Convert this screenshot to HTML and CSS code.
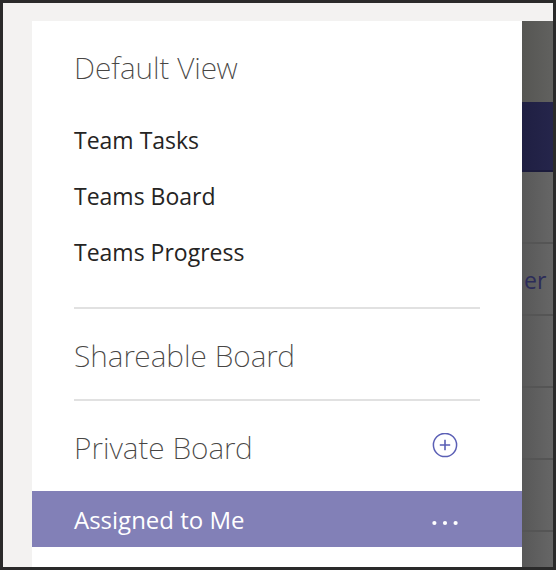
FILE: index.html
```
<!DOCTYPE html>
<html lang="en">
<head>
<meta charset="utf-8">
<title>Boards</title>
<link rel="stylesheet" href="styles.css">
</head>
<body>
<div class="window">
  <nav class="panel">
    <section class="group group-views">
      <h2 class="heading">Default View</h2>
      <ul class="list">
        <li><a class="item" href="#">Team Tasks</a></li>
        <li><a class="item" href="#">Teams Board</a></li>
        <li><a class="item" href="#">Teams Progress</a></li>
      </ul>
    </section>
    <section class="group">
      <h2 class="heading">Shareable Board</h2>
    </section>
    <section class="group">
      <div class="heading-row">
        <h2 class="heading">Private Board</h2>
        <button class="icon-button" type="button" aria-label="Add board">
          <svg width="26" height="26" viewBox="0 0 26 26" fill="none" stroke="currentColor">
            <circle cx="13" cy="12" r="11.6" stroke-width="1.5"/>
            <path d="M13 6.8v10.4M7.8 12h10.4" stroke-width="1.6"/>
          </svg>
        </button>
      </div>
    </section>
    <div class="selected">
      <a class="item" href="#">Assigned to Me</a>
      <button class="icon-button" type="button" aria-label="More options">
        <svg width="26" height="26" viewBox="0 0 26 26" fill="currentColor">
          <circle cx="2.4" cy="16" r="2.1"/>
          <circle cx="13" cy="16" r="2.1"/>
          <circle cx="23.6" cy="16" r="2.1"/>
        </svg>
      </button>
    </div>
  </nav>
  <main class="board">
    <div class="toolbar"></div>
    <div class="banner"></div>
    <div class="row"></div>
    <div class="row">er</div>
    <div class="row"></div>
    <div class="row"></div>
    <div class="row"></div>
    <div class="row"></div>
  </main>
</div>
</body>
</html>
```

FILE: styles.css
```
* {
  box-sizing: border-box;
}

body {
  margin: 0;
  font-family: "Open Sans", "Noto Sans", sans-serif;
}

.window {
  display: flex;
  height: 100vh;
  overflow: hidden;
  padding: 18px 0 0 29px;
  border: 3px solid #2a2a2a;
  background: #f3f2f1;
}

.panel {
  flex: 1;
  background: #fff;
}

.group {
  margin: 0 42px;
}

.group + .group {
  border-top: 2px solid #e1e1e1;
}

.group-views {
  padding-bottom: 27px;
}

.heading {
  margin: 0;
  padding-top: 4px;
  font-family: "Noto Sans", "Open Sans", sans-serif;
  font-size: 30px;
  font-weight: 200;
  line-height: 86px;
  color: #484644;
}

.group-views .heading {
  padding-bottom: 1px;
}

.list {
  margin: 0;
  padding: 0;
  list-style: none;
}

.item {
  display: block;
  font-size: 23px;
  line-height: 56px;
  color: #252423;
  text-decoration: none;
}

.heading-row,
.selected {
  display: flex;
  align-items: center;
  justify-content: space-between;
}

.heading-row {
  padding-right: 22px;
}

.selected {
  padding: 2px 64px 0 42px;
  background: #8280b7;
}

.selected .item {
  font-size: 24px;
  font-weight: 500;
  line-height: 54px;
  color: #fff;
}

.icon-button {
  display: flex;
  padding: 0;
  border: 0;
  background: none;
  color: #5b5fb5;
}

.selected .icon-button {
  color: #fff;
}

.board {
  flex: 0 0 31px;
  overflow: hidden;
  background: linear-gradient(to right, #585858, #666);
}

.toolbar {
  height: 81px;
  background: linear-gradient(to right, #565653, #61615f);
}

.banner {
  height: 70px;
  border-bottom: 2px solid #1b1b3c;
  background: linear-gradient(to right, #1f1f42, #25254b);
}

.row {
  height: 72px;
  padding-left: 2px;
  border-bottom: 2px solid #555;
  font-size: 23px;
  line-height: 72px;
  color: #2c2c59;
}
```
